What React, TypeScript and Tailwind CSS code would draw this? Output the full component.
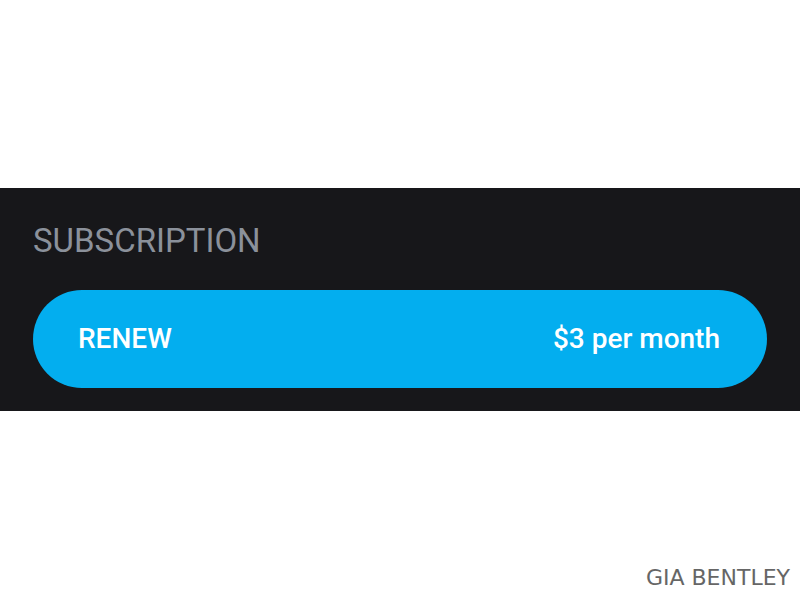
export default function App() {
  return (
    <div className="relative h-[600px] w-[800px] bg-white" style={{ fontFamily: "Roboto, sans-serif" }}>
      <div className="h-[188px]" />
      <section className="flex h-[223px] flex-col bg-[#17171a] px-[33px]">
        <h2 className="mt-[34px] text-[33px] leading-[38px] font-normal text-[#8b919b]">SUBSCRIPTION</h2>
        <button className="mt-[30px] flex h-[98px] w-full items-center justify-between rounded-full bg-[#03aeef] pl-[45px] pr-[47px] text-[28px] font-medium text-white">
          <span>RENEW</span>
          <span>$3 per month</span>
        </button>
      </section>
      <div
        className="absolute right-[10px] bottom-[11px] text-[22px] leading-[22px] text-[#666]"
        style={{ fontFamily: "'DejaVu Sans', sans-serif" }}
      >
        GIA BENTLEY
      </div>
    </div>
  );
}
